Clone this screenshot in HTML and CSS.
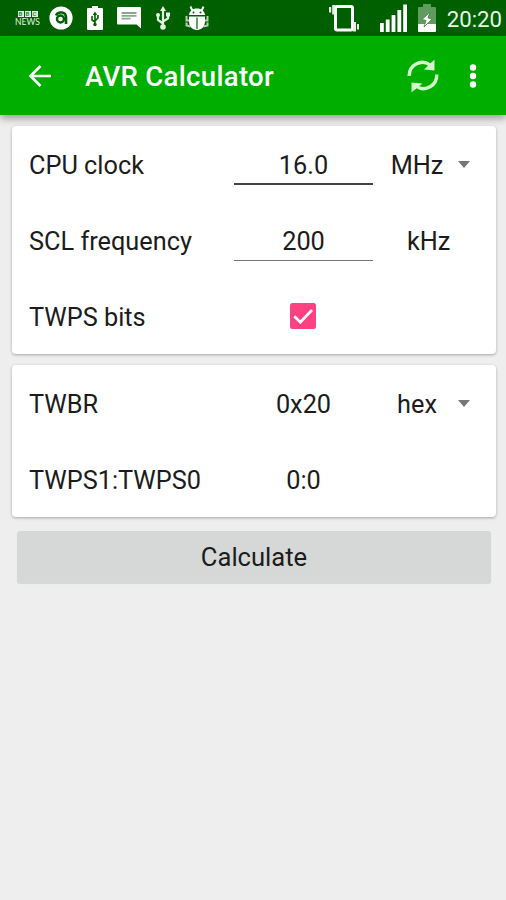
FILE: index.html
```html
<!DOCTYPE html>
<html lang="en">
<head>
  <meta charset="UTF-8">
  <title>AVR Calculator</title>
  <link rel="stylesheet" href="styles.css">
</head>
<body>

  <div class="status-bar">
    <div class="status-left">
      <div class="news"><span class="bbc"><b>B</b><b>B</b><b>C</b></span><span class="news-text">NEWS</span></div>
      <!-- avast -->
      <svg width="24" height="24" viewBox="0 0 24 24">
        <circle cx="12" cy="12" r="11.6" fill="#fff"/>
        <path d="M7 9.500C8.500 5.500 17 5 17 11.500V18" fill="none" stroke="#006000" stroke-width="2.600"/>
        <circle cx="11.500" cy="13" r="3.500" fill="none" stroke="#006000" stroke-width="2.400"/>
      </svg>
      <!-- battery -->
      <svg width="16" height="24" viewBox="0 0 16 24">
        <path d="M5 0h6v2h4a1 1 0 0 1 1 1v20a1 1 0 0 1-1 1H1a1 1 0 0 1-1-1V3a1 1 0 0 1 1-1h4z" fill="#fff"/>
        <path d="M8 7v12M5 10v4l3 2M11 9v3l-3 3" fill="none" stroke="#006000" stroke-width="1.6"/>
        <path d="M5.8 9L8 5.5 10.2 9z" fill="#006000"/>
        <circle cx="8" cy="18.5" r="1.7" fill="#006000"/>
      </svg>
      <!-- message -->
      <svg width="24" height="22" viewBox="0 0 24 22">
        <path d="M1 0h22a1 1 0 0 1 1 1v20.5L19.5 17.500H1a1 1 0 0 1-1-1V1a1 1 0 0 1 1-1z" fill="#fff"/>
        <path d="M4.500 6h15M4.500 8.800h15M4.500 11.600h9" stroke="#88ad88" stroke-width="1.8"/>
      </svg>
      <!-- usb -->
      <svg class="usb" width="14" height="24" viewBox="0 0 14 24">
        <path d="M7 3v18M2 9v5l5 3.5M12 8v4.500L7 15.500" fill="none" stroke="#e5efe5" stroke-width="2.200"/>
        <path d="M4 5l3-5 3 5zM10 6.500h4v4h-4z" fill="#e5efe5"/>
        <circle cx="2" cy="9" r="2" fill="#e5efe5"/>
        <circle cx="7" cy="21" r="2.800" fill="#e5efe5"/>
      </svg>
      <!-- debug bug -->
      <svg width="24" height="24" viewBox="0 0 24 24">
        <path d="M1.500 10v4.500h21V10M1.500 16.500v3l4 1M22.500 16.500v3l-4 1" fill="none" stroke="#b5d0b5" stroke-width="2"/>
        <path d="M4 9C4.500 5 7.500 2.500 12 2.500S19.500 5 20 9zM4 10.500h16V15c0 5.500-3 9-8 9s-8-3.500-8-9z" fill="#fff"/>
        <path d="M7.500 5L5.500 .5M16.500 5l2-4.500" stroke="#fff" stroke-width="2"/>
        <path d="M12 11.500V23" stroke="#006000" stroke-width="1.200"/>
        <circle cx="8.500" cy="6.500" r="1" fill="#006000"/>
        <circle cx="15.500" cy="6.500" r="1" fill="#006000"/>
      </svg>
    </div>
    <div class="status-right">
      <!-- vibrate -->
      <svg class="vibrate" width="30" height="28" viewBox="0 0 30 28">
        <rect x="6.500" y="2.500" width="17" height="23.500" rx="1.500" fill="none" stroke="#fff" stroke-width="3"/>
        <path d="M3.200 1h3v9.500h-3zM0 3h2.200v5.500H0zM24 18h3v9.500h-3zM28 20h2v5.500h-2z" fill="#e5efe5"/>
      </svg>
      <!-- signal -->
      <svg class="signal" width="27" height="28" viewBox="0 0 27 28">
        <path d="M0 19h3.800v9H0zM5.800 15.500h3.800V28H5.800zM11.600 11h3.800v17h-3.800zM17.400 6h3.800v22h-3.800zM23.200.5H27V28h-3.800z" fill="#fff"/>
      </svg>
      <!-- battery charging -->
      <svg class="charge" width="18" height="28" viewBox="0 0 18 28">
        <path d="M5 0h8v3h4a1 1 0 0 1 1 1v17H0V4a1 1 0 0 1 1-1h4z" fill="#609c60"/>
        <path d="M0 20h18v7a1 1 0 0 1-1 1H1a1 1 0 0 1-1-1z" fill="#fff"/>
        <path d="M12 8L4 15.500l4 1-2 6.500 8-8-4-1z" fill="#fff" stroke="#3d853d" stroke-width=".8"/>
      </svg>
      <span class="time">20:20</span>
    </div>
  </div>

  <div class="toolbar">
    <svg class="back" width="24" height="24" viewBox="0 0 24 24">
      <path d="M12.500 2L2.500 12l10 10M2.500 12H23" fill="none" stroke="#fff" stroke-width="2.600"/>
    </svg>
    <h1>AVR Calculator</h1>
    <svg class="refresh" width="32" height="34" viewBox="0 0 32 34">
      <path d="M2.200 17C2 6.500 13.500-.5 23 5.800" fill="none" stroke="#d0f8c8" stroke-width="3.400"/>
      <path d="M27.500.5V11.500L17 10.500z" fill="#d0f8c8"/>
      <path d="M29.800 15.500c.2 11-11.300 18-20.800 11.700" fill="none" stroke="#d0f8c8" stroke-width="3.400"/>
      <path d="M4.500 33.500V23.500L15.500 24.500z" fill="#d0f8c8"/>
    </svg>
    <svg class="more" width="8" height="24" viewBox="0 0 8 24">
      <circle cx="4" cy="3.500" r="3.200" fill="#fff"/>
      <circle cx="4" cy="12" r="3.200" fill="#fff"/>
      <circle cx="4" cy="20.500" r="3.200" fill="#fff"/>
    </svg>
  </div>

  <div class="content">
    <div class="card">
      <div class="row">
        <label for="cpu">CPU clock</label>
        <input id="cpu" class="focused" type="text" value="16.0">
        <div class="unit select"><span>MHz</span><i class="arrow"></i></div>
      </div>
      <div class="row">
        <label for="scl">SCL frequency</label>
        <input id="scl" type="text" value="200">
        <div class="unit">kHz</div>
      </div>
      <div class="row">
        <label>TWPS bits</label>
        <div class="value">
          <svg class="checkbox" width="26" height="26" viewBox="0 0 26 26">
            <rect width="26" height="26" rx="2.500" fill="#ff4081"/>
            <path d="M4.300 13.200l6 6L22 7" fill="none" stroke="#fff" stroke-width="2.700"/>
          </svg>
        </div>
      </div>
    </div>

    <div class="card">
      <div class="row">
        <label>TWBR</label>
        <div class="value">0x20</div>
        <div class="unit select"><span>hex</span><i class="arrow"></i></div>
      </div>
      <div class="row">
        <label>TWPS1:TWPS0</label>
        <div class="value">0:0</div>
      </div>
    </div>

    <button class="calculate">Calculate</button>
  </div>

</body>
</html>
```
FILE: styles.css
```css
* {
  box-sizing: border-box;
}
body {
  margin: 0;
  min-height: 900px;
  font-family: Roboto, sans-serif;
  font-size: 25.3px;
  color: #1c1c1c;
  background: #eeeeee;
}
svg {
  display: block;
  flex: none;
}
.status-bar {
  display: flex;
  justify-content: space-between;
  height: 36px;
  padding: 0 4px 0 16px;
  background: #006000;
}
.status-left, .status-right {
  display: flex;
  align-items: center;
}
.status-left {
  gap: 14px;
}
.usb {
  margin: 0 1px;
}
.news {
  width: 23px;
  margin-right: -4px;
  padding-top: 2px;
  color: #e5efe5;
}
.bbc {
  display: flex;
  justify-content: center;
  gap: 1px;
}
.bbc b {
  width: 6px;
  height: 6px;
  font-size: 6px;
  line-height: 6px;
  text-align: center;
  color: #3d853d;
  background: #e5efe5;
}
.news-text {
  display: block;
  margin-left: -1px;
  font-family: Lato, sans-serif;
  font-size: 8.5px;
  line-height: 10px;
  text-align: center;
}
.vibrate {
  margin-right: 21px;
}
.signal {
  margin-right: 11px;
}
.charge {
  margin-right: 11px;
}
.time {
  padding-top: 2px;
  font-size: 22.2px;
  line-height: 34px;
  color: #e8f6e8;
}
.toolbar {
  position: relative;
  display: flex;
  align-items: center;
  height: 79px;
  padding: 0 29px 0 28px;
  background: #00ae00;
  box-shadow: 0 3px 8px rgba(0, 0, 0, 0.38);
}
.toolbar h1 {
  flex: 1;
  margin: 0 0 0 33px;
  padding-top: 2px;
  font-size: 27.5px;
  font-weight: 500;
  letter-spacing: 0.33px;
  color: #fff;
}
.refresh {
  margin-right: 30px;
}
.content {
  padding: 11px 10px 0 12px;
}
.card {
  margin-bottom: 11px;
  background: #fff;
  border-radius: 4px;
  box-shadow: 0 1px 3px rgba(0, 0, 0, 0.3);
}
.row {
  display: grid;
  grid-template-columns: 205px 139px 1fr;
  align-items: center;
  height: 76px;
  padding: 2px 0 0 17px;
}
input {
  width: 139px;
  height: 40px;
  padding: 2px 0 0;
  border: 0;
  border-bottom: 1.5px solid #777;
  font: inherit;
  color: inherit;
  text-align: center;
  background: none;
  outline: none;
}
.focused {
  border-bottom: 2px solid #444;
}
.value {
  display: flex;
  justify-content: center;
}
.checkbox {
  margin: -3px 1px 0 0;
}
.unit {
  padding-left: 34px;
}
.select {
  display: flex;
  align-items: center;
  padding-left: 12px;
}
.select span {
  width: 64px;
  text-align: center;
}
.arrow {
  margin: -2px 0 0 9px;
  border: 6.5px solid transparent;
  border-top: 7px solid #777;
  border-bottom: 0;
}
.calculate {
  display: block;
  width: 474px;
  height: 52px;
  margin: 14px 0 0 5px;
  padding: 0;
  border: 0;
  border-radius: 3px;
  font: inherit;
  font-size: 25.6px;
  color: inherit;
  background: #d6d8d7;
  box-shadow: 0 1px 1px rgba(0, 0, 0, 0.1);
}
```
